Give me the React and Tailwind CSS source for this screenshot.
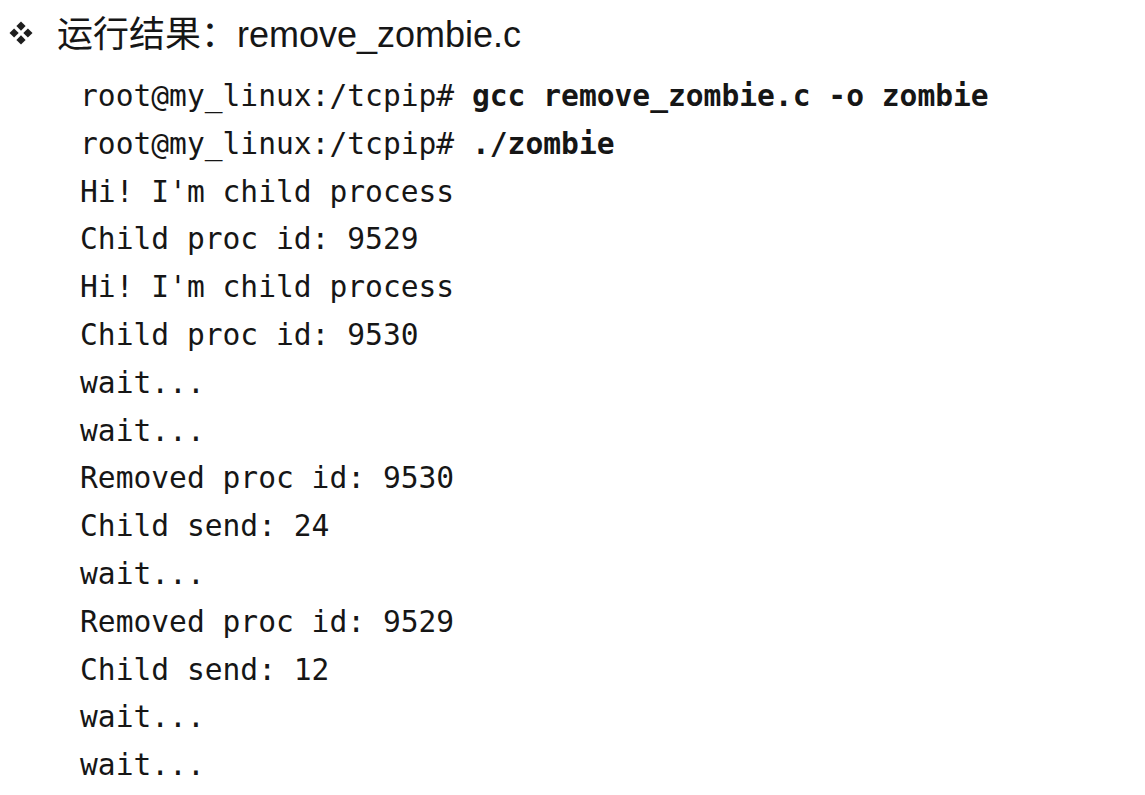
export default function App() {
  const lines = [
    { prompt: "root@my_linux:/tcpip# ", cmd: "gcc remove_zombie.c -o zombie" },
    { prompt: "root@my_linux:/tcpip# ", cmd: "./zombie" },
    { text: "Hi! I'm child process" },
    { text: "Child proc id: 9529" },
    { text: "Hi! I'm child process" },
    { text: "Child proc id: 9530" },
    { text: "wait..." },
    { text: "wait..." },
    { text: "Removed proc id: 9530" },
    { text: "Child send: 24" },
    { text: "wait..." },
    { text: "Removed proc id: 9529" },
    { text: "Child send: 12" },
    { text: "wait..." },
    { text: "wait..." },
  ];

  return (
    <div className="bg-white w-[1145px] h-[795px] overflow-hidden text-[#161616]">
      <div className="flex items-center h-[48px] mt-[11px] pl-[9px]">
        <svg width="24" height="24" viewBox="0 0 24 24" className="mr-[24px] mt-[-4px]">
          <g fill="#1e1e1e">
            <path d="M12 0.5 L16.6 5.1 L12 9.7 L7.4 5.1 Z" />
            <path d="M12 14.3 L16.6 18.9 L12 23.5 L7.4 18.9 Z" />
            <path d="M5.1 7.4 L9.7 12 L5.1 16.6 L0.5 12 Z" />
            <path d="M18.9 7.4 L23.5 12 L18.9 16.6 L14.3 12 Z" />
          </g>
        </svg>
        <span className="text-[36px] leading-[48px] font-['Liberation_Sans','Noto_Sans_CJK_SC',sans-serif]">
          运行结果：remove_zombie.c
        </span>
      </div>
      <div className="mt-[14px] pl-[80px] font-['DejaVu_Sans_Mono',monospace] text-[29.6px] leading-[47.8px] whitespace-pre">
        {lines.map((l, i) => (
          <div key={i}>
            {l.prompt ? (
              <>
                {l.prompt}
                <span className="font-bold">{l.cmd}</span>
              </>
            ) : (
              l.text
            )}
          </div>
        ))}
      </div>
    </div>
  );
}
